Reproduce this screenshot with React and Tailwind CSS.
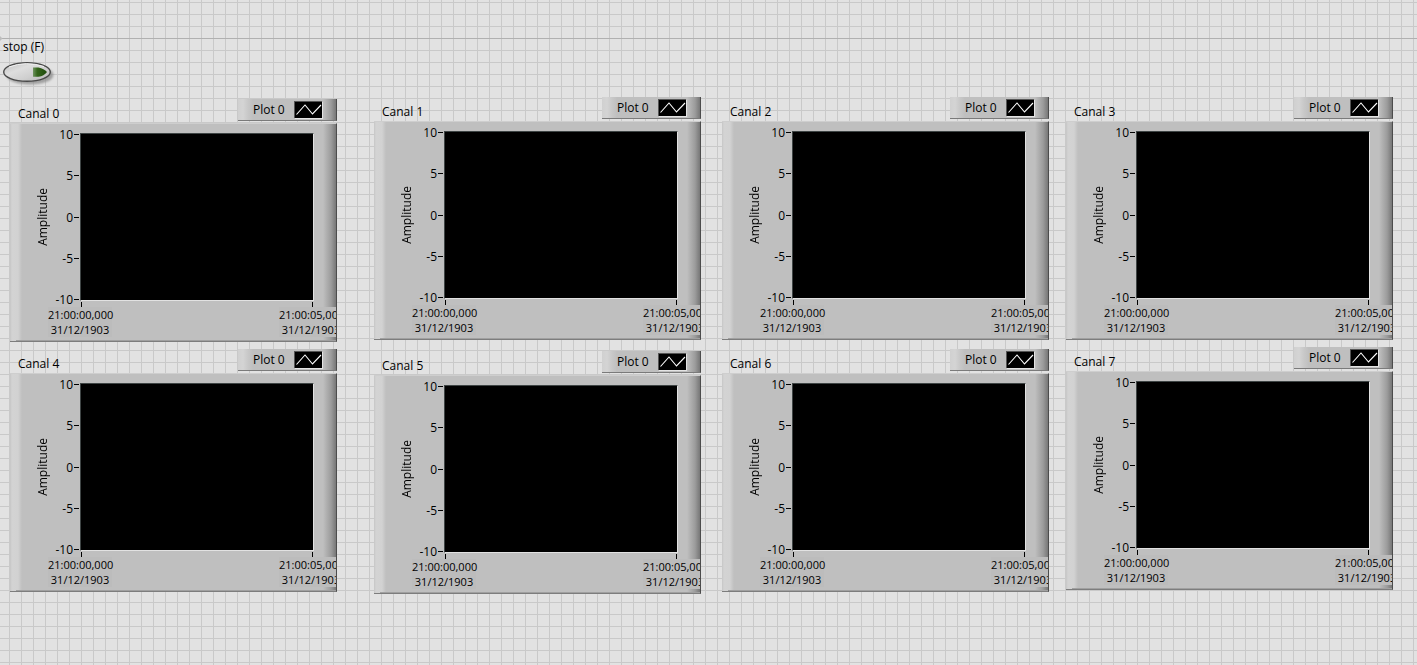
import React from "react";

const columns = [
  { pad: "pt-[2px] pr-[37px] gap-[7px]", charts: ["Canal 0", "Canal 4"] },
  { pad: "pr-[21px] gap-[11px]", charts: ["Canal 1", "Canal 5"] },
  { pad: "pr-[17px] gap-[9px]", charts: ["Canal 2", "Canal 6"] },
  { pad: "pr-6 gap-[7px]", charts: ["Canal 3", "Canal 7"] },
];

const scale = ["10", "5", "0", "-5", "-10"];

function Legend() {
  return (
    <div className="flex h-[22px] w-[99px] items-center justify-between border-r border-b border-r-[#4c4c4c] border-b-[#7a7a7a] bg-[linear-gradient(90deg,#d0d0d0_0,#d4d4d4_5px,#c8c8c8_10px,#bfbfbf_15px,#bfbfbf_calc(100%-13px),#9c9c9c_calc(100%-5px),#777_100%)] pr-[14px] pl-[15px]">
      <span className="leading-[18px]">Plot 0</span>
      <svg className="h-[17px] w-7 border-t border-l border-[#555] bg-black shadow-[1px_1px_0_#e4e4e4]" viewBox="0 0 27 16" aria-hidden="true">
        <path d="M1.500 12.5 10 3 17.5 12 26 3" fill="none" stroke="#fff" strokeWidth="1.1" />
      </svg>
    </div>
  );
}

function TimeLabel({ time }) {
  return (
    <div className="w-16 text-center text-[11px] leading-[15px] whitespace-nowrap">
      <div>{time}</div>
      <div>31/12/1903</div>
    </div>
  );
}

function Chart({ name }) {
  return (
    <section>
      <div className="flex justify-between">
        <h2 className="pt-[7px] pl-2 leading-[15px]">{name}</h2>
        <Legend />
      </div>
      <div className="mt-[2px] border-t border-r border-b border-t-[#cecece] border-r-[#4c4c4c] border-b-[#7d7d7d] bg-[linear-gradient(90deg,#c6c6c6_0,#d3d3d3_2px,#d2d2d2_8px,#bfbfbf_12px,#bfbfbf_calc(100%-13px),#9c9c9c_calc(100%-5px),#777_100%)] pt-[9px]">
        <div className="flex">
          <div className="flex w-[70px] items-center justify-between pl-[25px]">
            <span className="rotate-180 leading-4 [writing-mode:vertical-rl]">Amplitude</span>
            <ul className="-my-[6px] flex h-[180px] flex-col justify-between self-start">
              {scale.map((v) => (
                <li key={v} className="flex items-center justify-end gap-px pr-px leading-[15px]">
                  {v}
                  <span className="h-px w-[5px] bg-black" />
                </li>
              ))}
            </ul>
          </div>
          <div className="mr-[22px] h-[168px] flex-1 border border-t-[#3f4545] border-r-[#e2e2e2] border-b-[#e2e2e2] border-l-[#3f4545] bg-black" />
        </div>
        <div className="mr-[23px] ml-[71px] flex h-[6px] items-end justify-between">
          <span className="h-[5px] w-px bg-black" />
          <span className="h-[5px] w-px bg-black" />
        </div>
        <div className="flex justify-between pl-[38px]">
          <div className="bg-[#bcbcbc]"><TimeLabel time="21:00:00,000" /></div>
          <div className="w-[57px] overflow-hidden bg-[#bcbcbc]"><TimeLabel time="21:00:05,000" /></div>
        </div>
        <div className="ml-[6px] h-1 border-b border-[#a0a0a0]" />
      </div>
    </section>
  );
}

export default function App() {
  return (
    <main className="min-h-screen bg-[#e2e2e2] bg-[linear-gradient(90deg,#c9c9c9_1px,transparent_1px),linear-gradient(#c9c9c9_1px,transparent_1px)] bg-size-[12px_12px] bg-position-[9px_2px] font-['Open_Sans',sans-serif] text-[12px] text-black">
      <header className="h-[97px] pt-[38px]">
        <div className="relative h-px bg-[#b0b0b0]">
          <svg className="absolute -top-[2px] left-0 h-[5px] w-[3px]" viewBox="0 0 3 5" aria-hidden="true">
            <path d="M0 0 2.500 2.500 0 5z" fill="#bdbdbd" />
          </svg>
        </div>
        <div className="pl-[3px]">
          <label htmlFor="stop" className="block leading-4">stop (F)</label>
          <button id="stop" type="button" className="mt-[6px] block">
            <svg className="block h-7 w-[54px]" viewBox="0 0 54 28" aria-hidden="true">
              <defs>
                <linearGradient id="face" x1="0" y1="0" x2="1" y2="1">
                  <stop offset="0" stopColor="#bdbdbd" />
                  <stop offset=".35" stopColor="#dedede" />
                  <stop offset=".65" stopColor="#cfcfcf" />
                  <stop offset="1" stopColor="#b4b4b4" />
                </linearGradient>
                <linearGradient id="lamp">
                  <stop offset="0" stopColor="#6f9360" />
                  <stop offset=".3" stopColor="#35661c" />
                  <stop offset="1" stopColor="#1f4a0c" />
                </linearGradient>
                <filter id="soft"><feGaussianBlur stdDeviation="0.9" /></filter>
              </defs>
              <ellipse cx="27" cy="14" rx="23.500" ry="9.500" fill="#8a8a8a" opacity=".75" filter="url(#soft)" />
              <ellipse cx="24" cy="11" rx="23.300" ry="9.300" fill="url(#face)" stroke="#4a4a4a" strokeWidth="1.4" />
              <path d="M6 6Q23-.5 41 5.500" fill="none" stroke="#f2f2f2" strokeWidth="1" />
              <path d="M30 6.500h5.500q5.500 1 8.500 4.500-3 4-8.500 4.800h-5.500z" fill="url(#lamp)" />
            </svg>
          </button>
        </div>
      </header>
      <div className="grid grid-cols-[364fr_348fr_344fr_351fr] pl-[10px]">
        {columns.map((c) => (
          <div key={c.charts[0]} className={`flex flex-col ${c.pad}`}>
            {c.charts.map((n) => (
              <Chart key={n} name={n} />
            ))}
          </div>
        ))}
      </div>
    </main>
  );
}
